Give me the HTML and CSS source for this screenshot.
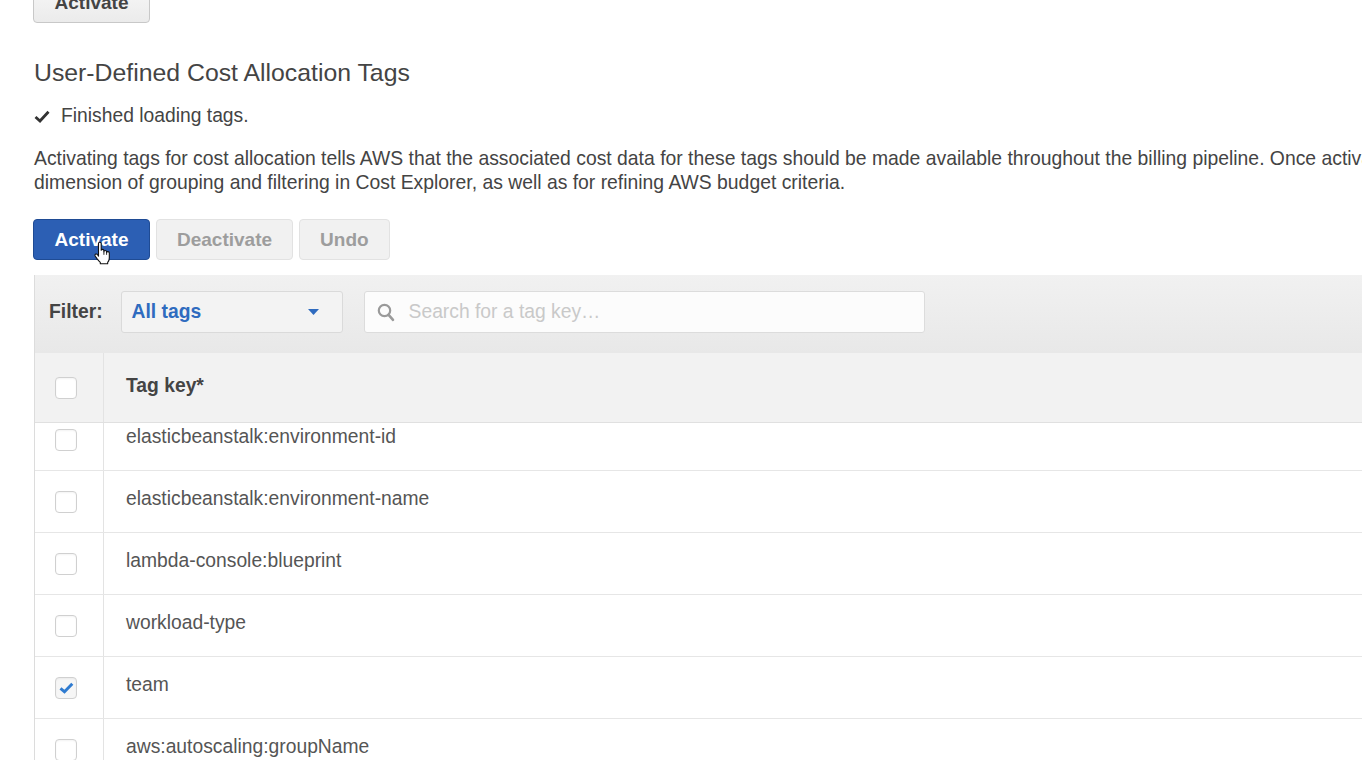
FILE: index.html
```html
<!DOCTYPE html>
<html>
<head>
<meta charset="utf-8">
<title>Cost Allocation Tags</title>
<link rel="stylesheet" href="styles.css">
</head>
<body>
<div class="page">
  <button class="btn btn-old">Activate</button>
  <h2 class="title">User-Defined Cost Allocation Tags</h2>
  <div class="status">
    <svg class="status-icon" width="16" height="13" viewBox="0 0 16 13"><path d="M1.5 7 L6 11 L14.5 1.8" fill="none" stroke="#333" stroke-width="2.8"/></svg>
    <span>Finished loading tags.</span>
  </div>
  <p class="desc">
    <span class="line">Activating tags for cost allocation tells AWS that the associated cost data for these tags should be made available throughout the billing pipeline. Once activated, cost allocation tags can be used as a</span>
    <span class="line">dimension of grouping and filtering in Cost Explorer, as well as for refining AWS budget criteria.</span>
  </p>
  <div class="actions">
    <div class="btn-wrap">
      <button class="btn btn-primary">Activate</button>
      <svg class="cursor" width="18" height="24" viewBox="0 0 20 26"><path d="M5 2.5 Q5 1 6.5 1 Q8 1 8 2.5 V10 Q8 9 9.5 9 Q11 9 11 10.5 V11.5 Q11 10.3 12.5 10.3 Q14 10.3 14 11.8 V12.5 Q14 11.5 15.5 11.5 Q17 11.5 17 13 V18.5 Q17 21.5 15.2 23.5 V25 H7 V23.5 Q5.5 22 3.5 19.5 L1.3 16.3 Q0.7 14.8 1.9 14.2 Q3.2 13.7 4 15 L5 16.5 Z" fill="#fff" stroke="#111" stroke-width="1.2" stroke-linejoin="round"/><path d="M11 11.5 V15 M14 12.5 V15" stroke="#111" stroke-width="1"/></svg>
    </div>
    <button class="btn btn-disabled">Deactivate</button>
    <button class="btn btn-disabled">Undo</button>
  </div>
  <div class="table">
    <div class="filter-bar">
      <span class="filter-label">Filter:</span>
      <div class="select">
        <span>All tags</span>
        <svg width="11" height="6" viewBox="0 0 11 6"><path d="M0 0 H11 L5.5 6 Z" fill="#2f6bbf"/></svg>
      </div>
      <div class="search">
        <svg width="18" height="19" viewBox="0 0 18 19"><circle cx="7.5" cy="7.5" r="5.7" fill="none" stroke="#9a9a9a" stroke-width="2.2"/><path d="M11.6 11.8 L16 16.8" stroke="#9a9a9a" stroke-width="2.6" stroke-linecap="round"/></svg>
        <span>Search for a tag key…</span>
      </div>
    </div>
    <div class="row thead">
      <div class="cell-check"><span class="cb"></span></div>
      <div class="cell-key head-key">Tag key*</div>
    </div>
    <div class="tbody">
      <div class="rows">
        <div class="row trow"><div class="cell-check"><span class="cb"></span></div><div class="cell-key">elasticbeanstalk:environment-id</div></div>
        <div class="row trow"><div class="cell-check"><span class="cb"></span></div><div class="cell-key">elasticbeanstalk:environment-name</div></div>
        <div class="row trow"><div class="cell-check"><span class="cb"></span></div><div class="cell-key">lambda-console:blueprint</div></div>
        <div class="row trow"><div class="cell-check"><span class="cb"></span></div><div class="cell-key">workload-type</div></div>
        <div class="row trow"><div class="cell-check"><span class="cb cb-checked"><svg width="15" height="12" viewBox="0 0 15 12"><path d="M1.5 6.3 L5.5 9.8 L13.3 1.8" fill="none" stroke="#2f7bd0" stroke-width="3"/></svg></span></div><div class="cell-key">team</div></div>
        <div class="row trow"><div class="cell-check"><span class="cb"></span></div><div class="cell-key">aws:autoscaling:groupName</div></div>
      </div>
    </div>
  </div>
</div>
</body>
</html>
```

FILE: styles.css
```css
html, body {
  margin: 0;
  padding: 0;
}
body {
  font-family: "Liberation Sans", Arial, sans-serif;
  font-size: 19.3px;
  color: #444;
  background: #fff;
  overflow: hidden;
  height: 760px;
}
.page {
  padding-left: 33px;
}
.btn {
  font-family: "Liberation Sans", Arial, sans-serif;
  font-weight: bold;
  font-size: 19px;
  height: 41px;
  padding: 0 20px;
  border-radius: 4px;
  border: 1px solid #ccc;
  box-sizing: border-box;
  cursor: pointer;
}
.btn-old {
  display: block;
  margin-top: -18px;
  width: 117px;
  background: linear-gradient(#f8f8f8, #ebebeb);
  border-color: #c8c8c8;
  color: #444;
}
.title {
  margin: 37px 0 0 1px;
  font-size: 24.8px;
  font-weight: normal;
  line-height: 26px;
  color: #444;
}
.status {
  margin: 20px 0 0 1px;
  display: flex;
  align-items: center;
  gap: 11px;
  line-height: 20px;
  color: #444;
}
.status-icon {
  flex: none;
}
.desc {
  margin: 20px 0 0 1px;
  font-size: 19.35px;
  line-height: 24px;
  color: #444;
}
.desc .line {
  display: block;
  white-space: nowrap;
}
.actions {
  margin-top: 25px;
  display: flex;
  gap: 6px;
}
.btn-wrap {
  position: relative;
}
.btn-primary {
  width: 117px;
  background: #2c5fb4;
  border-color: #1f4b94;
  color: #fff;
}
.btn-disabled {
  background: #f1f1f1;
  border-color: #e2e2e2;
  color: #9d9d9d;
}
.cursor {
  position: absolute;
  left: 61px;
  top: 22px;
}
.table {
  margin-top: 15px;
  margin-left: 1px;
  border-left: 1px solid #dcdcdc;
}
.filter-bar {
  height: 78px;
  box-sizing: border-box;
  display: flex;
  align-items: flex-start;
  padding: 16px 0 0 14px;
  background: linear-gradient(#f1f1f1, #e8e8e8);
}
.filter-label {
  font-weight: bold;
  color: #444;
  line-height: 42px;
  margin-right: 18px;
}
.select {
  width: 222px;
  height: 42px;
  box-sizing: border-box;
  border: 1px solid #dadada;
  border-radius: 3px;
  background: #f3f3f3;
  display: flex;
  align-items: center;
  justify-content: space-between;
  padding: 0 23px 0 10px;
  color: #2f6bbf;
  font-weight: bold;
}
.search {
  margin-left: 21px;
  width: 561px;
  height: 42px;
  box-sizing: border-box;
  border: 1px solid #dcdcdc;
  border-radius: 3px;
  background: #fcfcfc;
  display: flex;
  align-items: center;
  gap: 14px;
  padding-left: 12px;
  color: #c9c9c9;
}
.row {
  display: flex;
  align-items: stretch;
}
.thead {
  height: 70px;
  box-sizing: border-box;
  background: #f2f2f2;
  border-bottom: 1px solid #e0e0e0;
}
.cell-check {
  width: 69px;
  flex: none;
  border-right: 1px solid #e3e3e3;
  display: flex;
  align-items: center;
  padding-left: 20px;
  box-sizing: border-box;
}
.cell-key {
  padding: 0 0 6px 22px;
  display: flex;
  align-items: center;
  color: #555;
}
.head-key {
  font-weight: bold;
  color: #444;
  padding-bottom: 3px;
}
.cb {
  width: 22px;
  height: 22px;
  box-sizing: border-box;
  border: 1px solid #d0d0d0;
  border-radius: 4px;
  background: #fff;
  box-shadow: inset 0 1px 2px rgba(0, 0, 0, 0.05);
  display: flex;
  align-items: center;
  justify-content: center;
}
.cb-checked {
  background: #f6f6f6;
}
.tbody {
  height: 337px;
  overflow: hidden;
}
.rows {
  margin-top: -14px;
}
.trow {
  height: 62px;
  box-sizing: border-box;
  border-bottom: 1px solid #e6e6e6;
}
```
